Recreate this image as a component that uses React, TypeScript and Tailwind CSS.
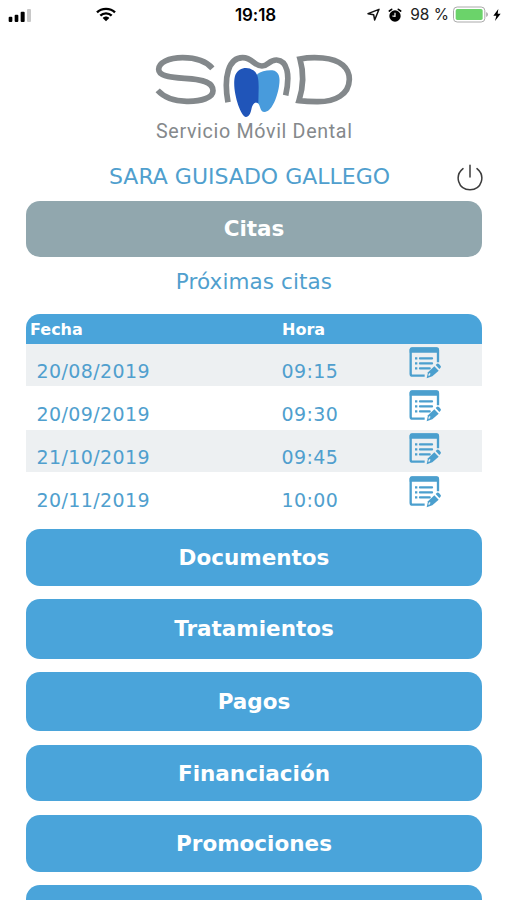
interface Appointment {
  date: string;
  time: string;
}

const appointments: Appointment[] = [
  { date: "20/08/2019", time: "09:15" },
  { date: "20/09/2019", time: "09:30" },
  { date: "21/10/2019", time: "09:45" },
  { date: "20/11/2019", time: "10:00" },
];

const sections = [
  { label: "Documentos", size: "h-[57px] pt-px mb-[13px]" },
  { label: "Tratamientos", size: "h-[60px] pb-px mb-[13px]" },
  { label: "Pagos", size: "h-[59px] mb-[14px]" },
  { label: "Financiación", size: "h-[56px] pt-[2px] mb-[14px]" },
  { label: "Promociones", size: "h-[57px] pt-px mb-[13px]" },
  { label: "", size: "h-[57px]" },
];

function StatusBar() {
  return (
    <header className="grid h-[30px] grid-cols-[1fr_auto_1fr] items-center pr-[6px] pl-2 font-['Inter',sans-serif] text-black">
      <div className="flex items-center gap-[64px]">
        <svg className="-mt-[2px] h-[15px] w-6" viewBox="0 0 72 45">
          <rect x="2" y="29" width="11" height="16" rx="3" />
          <rect x="20" y="23" width="11" height="22" rx="3" />
          <rect x="38" y="14" width="12" height="31" rx="3" />
          <rect x="57" y="6" width="12" height="39" rx="3" fill="#c8c8c8" />
        </svg>
        <svg className="-mt-[2px] h-[15px] w-5" viewBox="0 0 60 45" fill="none" stroke="#000" strokeWidth="7">
          <path d="M3 16C17 2 43 2 57 16" />
          <path d="M13 26C22 17 38 17 47 26" />
          <path d="M20 33c5-6 15-6 20 0L30 43z" fill="#000" stroke="none" />
        </svg>
      </div>
      <span className="pt-px pl-[2px] text-[17px] leading-none font-semibold tracking-[-0.1px]">19:18</span>
      <div className="flex items-center justify-end pb-px">
        <svg className="mr-[8px] h-[13px] w-[13px]" viewBox="0 0 39 39" fill="none" stroke="#111" strokeWidth="4.5" strokeLinejoin="round">
          <path d="M3 17 36 4 23 36 20 20z" />
        </svg>
        <svg className="mr-[8px] h-[14px] w-[14px]" viewBox="0 0 42 42">
          <circle cx="21" cy="24" r="17" />
          <path d="M4 9 11 4M38 9 31 4" stroke="#000" strokeWidth="5" strokeLinecap="round" />
          <path d="M21 14v11l-8-1" fill="none" stroke="#fff" strokeWidth="3.5" />
        </svg>
        <span className="mr-[4px] pt-px text-[15.5px] leading-none whitespace-pre text-[#222]">98 %</span>
        <svg className="mr-[4px] h-[17px] w-9" viewBox="0 0 108 51">
          <rect x="1.5" y="3" width="94" height="45" rx="11" fill="#fff" stroke="#aaa" strokeWidth="3" />
          <rect x="8" y="9" width="81" height="33" rx="5" fill="#6bd36a" />
          <path d="M100 18c6 3 6 12 0 15z" fill="#999" />
        </svg>
        <svg className="h-3 w-[8px]" viewBox="0 0 24 36">
          <path d="M16 0 1 20h9L6 36 23 14h-9z" />
        </svg>
      </div>
    </header>
  );
}

function Logo() {
  return (
    <svg className="ml-[140px] block h-[110px] w-[230px]" viewBox="0 0 690 330" role="img">
      <g fill="none" stroke="#83888b" strokeWidth="17">
        <path d="M217 85C198 63 165 53 128 53C86 53 56 68 56 88C56 105 80 112 134 115C196 118 219 130 219 152C219 173 184 185 140 184C103 183 72 172 53 151" />
        <path d="M264 187C250 110 266 53 308 53C338 53 342 78 366 78C384 78 388 59 410 60C442 62 451 104 437 166" />
        <path d="M480 57C500 53 525 52 548 54C603 59 628 85 628 118C627 163 587 186 530 185C511 185 493 184 477 182C490 141 491 95 480 57Z" />
      </g>
      <path d="M352 102C362 94 380 90 397 91C417 94 422 113 417 139C411 177 393 216 374 216C357 216 363 188 349 188L343 140Z" fill="#489bdc" />
      <path d="M286 105C295 82 323 78 340 91C354 101 356 117 356 142L355 190C346 183 338 193 335 204C332 220 327 231 318 231C300 229 273 142 286 105Z" fill="#2055b9" />
      <text
        x="48"
        y="294"
        fontSize="59"
        textLength="588"
        lengthAdjust="spacing"
        fill="#85898c"
        fontFamily="Roboto, sans-serif"
      >
        Servicio Móvil Dental
      </text>
    </svg>
  );
}

function EditIcon() {
  return (
    <svg className="h-[32px] w-[32px]" viewBox="0 0 96 96" fill="none" stroke="#4b9fce">
      <path d="M47 86H11Q5 86 5 80V9Q5 5 9 5H82Q87 5 87 10V46" strokeWidth="7" />
      <path d="M2 17V8Q2 1 9 1H83Q90 1 90 8V17Z" fill="#4b9fce" stroke="none" />
      <path d="M33 34H69M33 49H69M33 64H62" strokeWidth="7" strokeLinecap="round" />
      <path d="M18 34H25M18 49H25M18 64H25" strokeWidth="7" />
      <path d="M53 94 57 76 76 58 89 71 70 88Z" fill="#4b9fce" stroke="none" />
      <path d="M80 54 84 50Q87 48 90 51L95 57Q97 60 94 63L91 66Z" fill="#4b9fce" stroke="none" />
      <path d="M59 86 63 79" stroke="#eef2f4" strokeWidth="4" />
    </svg>
  );
}

function AppointmentTable() {
  return (
    <section className="text-[#509fce]">
      <div className="grid h-[29.5px] grid-cols-[251px_126px_1fr] items-center rounded-t-[14px] bg-[#4aa4da] pt-[2px] pl-1 text-[16px] font-bold text-white">
        <span>Fecha</span>
        <span className="pl-px">Hora</span>
      </div>
      {appointments.map(({ date, time }) => (
        <div
          key={date}
          className="grid h-[43.1px] grid-cols-[245px_127px_1fr] border-b border-white pl-[10.5px] text-[19px] tracking-[0.4px] odd:bg-white even:bg-[#edf0f2]"
        >
          <span className="pt-[13.5px] leading-[28px]">{date}</span>
          <span className="pt-[13.5px] leading-[28px]">{time}</span>
          <span className="pt-[3.5px]">
            <EditIcon />
          </span>
        </div>
      ))}
    </section>
  );
}

export default function App() {
  return (
    <div className="h-[900px] w-[507px] overflow-hidden bg-white font-['DejaVu_Sans',sans-serif]">
      <StatusBar />
      <div className="pt-[10px]">
        <Logo />
      </div>
      <main className="mr-[25px] ml-[26px]">
        <div className="relative flex h-[51px] items-center justify-center pt-[2px] pr-[9px]">
          <h1 className="text-[22px] whitespace-nowrap text-[#509fce]">SARA GUISADO GALLEGO</h1>
          <svg
            className="absolute top-[14px] right-[-2px] h-[28px] w-[28px]"
            viewBox="0 0 84 84"
            fill="none"
            stroke="#3c3c3c"
            strokeWidth="4.5"
            strokeLinecap="round"
          >
            <path d="M42 4V39M21 14C-5 35 6 77 42 77S89 35 63 14" />
          </svg>
        </div>
        <button className="flex h-[56px] w-full items-center justify-center rounded-[14px] bg-[#91a7ae] pt-px text-[21.5px] font-bold text-white">
          Citas
        </button>
        <h2 className="flex h-[57px] items-center justify-center pb-[6px] text-[21.5px] tracking-[0.1px] text-[#509fce]">
          Próximas citas
        </h2>
        <AppointmentTable />
        <nav className="pt-[13.6px]">
          {sections.map(({ label, size }) => (
            <button
              key={label}
              className={`flex w-full items-center justify-center rounded-[14px] bg-[#4aa4da] text-[21.5px] font-bold text-white ${size}`}
            >
              {label}
            </button>
          ))}
        </nav>
      </main>
    </div>
  );
}
